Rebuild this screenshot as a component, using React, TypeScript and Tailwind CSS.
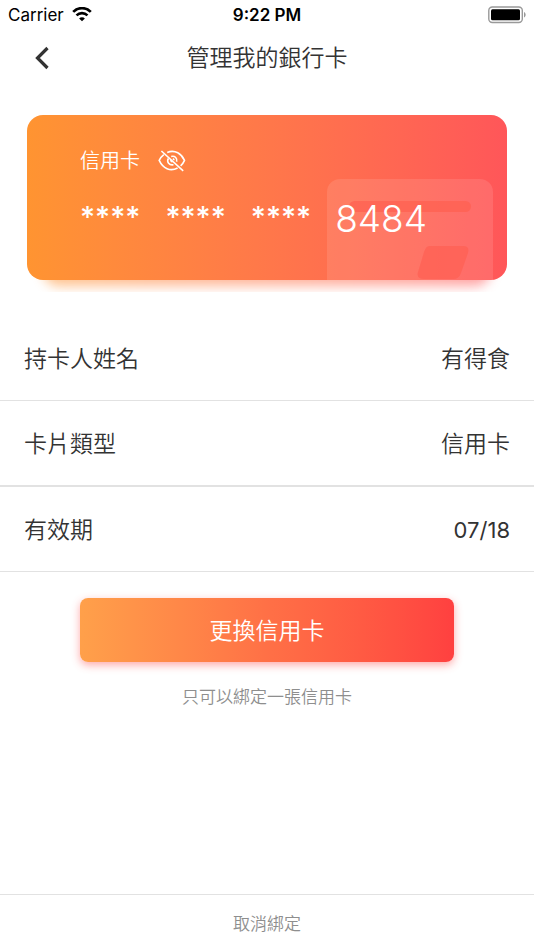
import type { ReactNode } from "react";

const fontStack = "font-['Inter','Noto_Sans_CJK_TC',sans-serif]";

function WifiIcon() {
  return (
    <svg width="20" height="15" viewBox="0 0 20 15" fill="none" aria-hidden="true">
      <path d="M1.2 4.9C6.2-.1 13.800-.1 18.800 4.900" stroke="#000" strokeWidth="2.700" />
      <path d="M4.500 8.400C7.600 5.400 12.400 5.400 15.500 8.400" stroke="#000" strokeWidth="2.600" />
      <path d="M10 14.300 7.100 11.400C8.700 9.900 11.300 9.900 12.900 11.400Z" fill="#000" />
    </svg>
  );
}

function BatteryIcon() {
  return (
    <svg width="38" height="18" viewBox="0 0 38 18" aria-hidden="true">
      <rect x="0.800" y="1" width="33.500" height="15.500" rx="3.500" fill="none" stroke="#999" strokeWidth="1.400" />
      <rect x="3" y="3.200" width="29" height="11" rx="1.500" fill="#000" />
      <path d="M36 6c2.200 1 2.200 4.500 0 5.500Z" fill="#999" />
    </svg>
  );
}

function HiddenEyeIcon() {
  return (
    <svg width="28" height="22" viewBox="0 0 28 22" fill="none" stroke="#fff" strokeWidth="1.600" aria-hidden="true">
      <path d="M3.400 1 25.200 20.800" />
      <path d="M9.200 2.400C17.200-.8 23.700 4 26.500 10.400c-.9 2.100-2.200 4-3.900 5.500" />
      <path d="M5.800 4.700C4 6.100 2.400 8 1.200 10.400 5 18.600 12.200 21.800 19.600 18" />
      <path d="M10.400 8.300c-2 3.500.8 7.300 5.100 6.500" />
      <path d="M13.200 6.500c3.800-1 6.400 1.900 5.400 5.300" />
      <path d="M12.900 9.500c-.3 1.100.3 2 1.500 2.100M14.800 8.900c.8.200 1.200.7 1.200 1.400" />
    </svg>
  );
}

function CardArtwork() {
  return (
    <svg className="absolute right-[14px] bottom-0" width="166" height="101" viewBox="0 0 166 101" aria-hidden="true">
      <path d="M0 101V13A13 13 0 0 1 13 0H153A13 13 0 0 1 166 13V101Z" fill="#fff" fillOpacity="0.110" />
      <rect x="22" y="22" width="122" height="11" rx="5.500" fill="#ff5f50" fillOpacity="0.700" />
      <path
        d="M102 67h34q7 0 5 7l-7 20q-2 6-8 6H97q-8 0-6-7l6-20q2-6 5-6Z"
        fill="#ff5f52"
        fillOpacity="0.700"
      />
    </svg>
  );
}

function DetailRow({ label, children, divider }: { label: string; children: ReactNode; divider: string }) {
  return (
    <div className={`flex items-center justify-between border-[#e2e2e2] px-6 pt-0.5 ${divider}`}>
      <dt>{label}</dt>
      <dd>{children}</dd>
    </div>
  );
}

export default function App() {
  return (
    <div className={`flex min-h-screen flex-col bg-white text-[#333] ${fontStack}`}>
      <div className="flex h-[29px] items-center px-2 text-[17px] leading-7 text-black">
        <div className="flex flex-1 items-center gap-2">
          <span>Carrier</span>
          <WifiIcon />
        </div>
        <span className="text-center font-semibold">9:22 PM</span>
        <div className="flex flex-1 justify-end">
          <BatteryIcon />
        </div>
      </div>

      <header className="grid h-[57px] grid-cols-[84px_1fr_84px] items-center">
        <button type="button" aria-label="返回" className="flex h-full items-center justify-center">
          <svg width="14" height="24" viewBox="0 0 14 24" fill="none" stroke="#333" strokeWidth="3.200" aria-hidden="true">
            <path d="M12.500 2 2.500 12l10 10" />
          </svg>
        </button>
        <h1 className="text-center text-[23px] leading-8 font-[350]">管理我的銀行卡</h1>
      </header>

      <main className="flex flex-1 flex-col">
        <div className="overflow-hidden px-[27px] pt-[29px] pb-3">
          <section className="relative flex h-[165px] flex-col px-[53px] pt-8 text-white">
            <div className="absolute inset-x-4 -bottom-1.5 h-8 rounded-2xl bg-linear-to-r from-[#ff9431] to-[#ff5659] opacity-55 blur-[6px]" />
            <div className="absolute inset-0 rounded-2xl bg-linear-to-r from-[#ff9431] to-[#ff5659]" />
            <CardArtwork />
            <div className="relative flex h-7 items-center gap-[18px] text-[20px] leading-7 font-[350]">
              <span>信用卡</span>
              <button type="button" aria-label="顯示卡號">
                <HiddenEyeIcon />
              </button>
            </div>
            <p className="relative mt-5 flex h-12 items-center gap-6 leading-10 whitespace-nowrap">
              <span className="flex gap-[25px] pb-1 text-[29px] font-medium">
                <span>****</span>
                <span>****</span>
                <span>****</span>
              </span>
              <span className="text-[37px] font-[350]">8484</span>
            </p>
          </section>
        </div>

        <dl className="mt-[23px] text-[23px] leading-8 font-[350]">
          <DetailRow label="持卡人姓名" divider="h-[86px] border-b">有得食</DetailRow>
          <DetailRow label="卡片類型" divider="h-[86px] border-b-2">信用卡</DetailRow>
          <DetailRow label="有效期" divider="h-[85px] border-b">
            <span className="text-[22px] font-normal">07/18</span>
          </DetailRow>
        </dl>

        <div className="mt-[26px] px-20">
          <button
            type="button"
            className="h-16 w-full rounded-lg bg-linear-to-r from-[#ffa04a] via-[#ff7046] to-[#ff4040] pt-0.5 text-[23px] leading-8 font-[350] text-white shadow-[0_3px_8px_rgba(255,64,64,0.45)]"
          >
            更換信用卡
          </button>
        </div>
        <p className="mt-[23px] text-center text-[17px] leading-6 font-[350] text-[#8e8e8e]">只可以綁定一張信用卡</p>
      </main>

      <footer className="h-[57px] border-t border-[#e2e2e2]">
        <button type="button" className="h-full w-full pt-0.5 text-[17px] leading-6 font-[350] text-[#8e8e8e]">
          取消綁定
        </button>
      </footer>
    </div>
  );
}
